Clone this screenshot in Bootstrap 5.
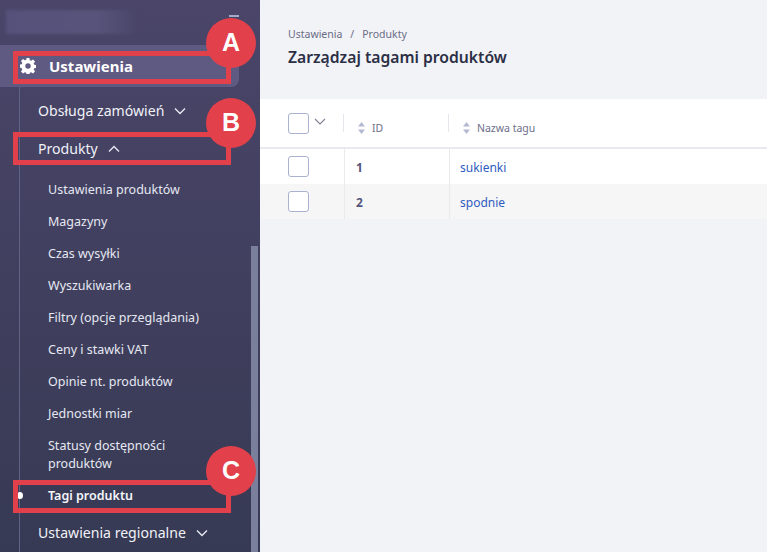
<!doctype html>
<html lang="pl"><head><meta charset="utf-8"><title>Tagi</title>
<link href="https://cdn.jsdelivr.net/npm/bootstrap@5.3.0/dist/css/bootstrap.min.css" rel="stylesheet">
<style>
html,body{height:100%;overflow:hidden}
body{font-family:"Noto Sans","Liberation Sans",sans-serif;background:#f2f3f7;position:relative;width:767px;height:552px}
.shell{height:552px}
.side{width:260px;height:552px;flex:none;background:linear-gradient(180deg,#4a4569 0%,#373a54 100%);position:relative;overflow:hidden;color:#eef0f6}
.logo-blur{height:24px;width:130px;margin:10px 0 11px 6px;background:linear-gradient(90deg,#55517a,#57537a 70%,#4a4569);filter:blur(1.5px)}
.burger{position:absolute;left:229px;top:15px;width:10px;height:2px;background:#a3abc9}
.top-item{height:42px;width:239px;background:#5f5a82;border-radius:0 0 8px 0;padding:0 0 0 20px;font-weight:700;font-size:15px;color:#fff;gap:13px}
.tree{border-left:1px solid #5f6385;margin-left:19px;height:470px;padding-top:5px}
.lvl2{font-size:14.1px;height:38px;padding-left:18px;gap:10px;color:#f0f1f7}
.lvl2.open{margin-bottom:6px}
.lvl2.last{margin-top:2px}
.lvl3{font-size:12.5px;line-height:18px;padding:7px 0 7px 28px;color:#e6e8f2;width:190px}
.lvl3.cur{font-weight:600;color:#f4f5fa;position:relative}
.cur-dot{position:absolute;left:-3px;top:12px;width:6px;height:7px;border-radius:50%;background:#fff}
.sbar{position:absolute;left:251px;top:246px;width:7px;height:306px;background:#7a7f9c}
.crumbs{padding:27px 28px 0;font-size:10.5px;color:#6a6d85;height:99px}
.crumbs .sep{margin:0 8px}
.ttl{font-size:15.7px;font-weight:600;color:#2b2f45;margin:2px 0 0;line-height:24px}
.thead-row{height:50px;background:#fff;border-bottom:2px solid #e9eaee;color:#6d6f8a;font-size:10.5px}
.trow{height:35px;background:#fff}
.trow.alt{background:#f6f6f7}
.c1{width:84px;flex:none;padding-left:28px;gap:5px}
.c2{width:105px;flex:none}
.c3{flex:1}
.thead-row .c1{width:83px}
.thead-row .c2,.thead-row .c3{height:18px;padding:9px 0 0 14px;gap:7px;border-left:1px solid #e6e7ec}
.thead-row span:not(.cbx){margin-top:3px}
.trow .c2,.trow .c3{height:100%;border-left:1px solid #e9eaee;padding:2px 0 0 11px}
.trow .c2{font-weight:700;font-size:12px;color:#53567a}
.trow .c3{font-size:12px;color:#2f5cc0;padding-left:10px}
.cbx{width:21px;height:21px;border:1px solid #a9b2cf;border-radius:3px;background:#fff;flex:none}
.note{position:absolute;border:5px solid #e2404a;left:13px;width:218px;height:33px;pointer-events:none}
.pin{position:absolute;left:206px;width:50px;height:50px;border-radius:50%;background:#e2404a;color:#fff;font-weight:700;font-size:25px;font-family:"Liberation Sans",sans-serif}
.main-col{min-width:0}
.ch-h{margin-bottom:4px}
.note-a{top:51px}.note-b{top:132px}.note-c{top:480px}
.pin-a{top:18px}.pin-b{top:98px}.pin-c{top:446px}
</style></head><body>
<div class="d-flex shell">
<nav class="side">
  <div class="logo-blur"></div>
  <div class="burger"></div>
  <div class="top-item d-flex align-items-center">
    <svg width="16" height="16" viewBox="0 0 16 16" fill="#fff"><path fill-rule="evenodd" d="M6.600 0h2.800l.4 2.200 1.300.6 1.900-1.300 2 2-1.300 1.900.6 1.300 2.200.4v2.800l-2.200.4-.6 1.300 1.300 1.900-2 2-1.900-1.300-1.300.6-.4 2.200H6.600l-.4-2.200-1.300-.6-1.900 1.300-2-2 1.300-1.900-.6-1.300L-.5 9.400V6.600l2.200-.4.6-1.300L1 3l2-2 1.900 1.300 1.300-.6zM8 5.300a2.700 2.700 0 1 0 0 5.400 2.700 2.700 0 0 0 0-5.400z"/></svg>
    <span>Ustawienia</span>
  </div>
  <div class="tree">
    <div class="lvl2 d-flex align-items-center"><span>Obsługa zamówień</span><svg width="12" height="8" viewBox="0 0 12 8" fill="none" stroke="#e6e8f2" stroke-width="1.400"><path d="M1 1.500l5 5 5-5"/></svg></div>
    <div class="lvl2 open d-flex align-items-center"><span>Produkty</span><svg width="12" height="8" viewBox="0 0 12 8" fill="none" stroke="#e6e8f2" stroke-width="1.400"><path d="M1 6.500l5-5 5 5"/></svg></div>
    <div class="lvl3">Ustawienia produktów</div>
    <div class="lvl3">Magazyny</div>
    <div class="lvl3">Czas wysyłki</div>
    <div class="lvl3">Wyszukiwarka</div>
    <div class="lvl3">Filtry (opcje przeglądania)</div>
    <div class="lvl3">Ceny i stawki VAT</div>
    <div class="lvl3">Opinie nt. produktów</div>
    <div class="lvl3">Jednostki miar</div>
    <div class="lvl3">Statusy dostępności produktów</div>
    <div class="lvl3 cur"><span class="cur-dot"></span>Tagi produktu</div>
    <div class="lvl2 last d-flex align-items-center"><span>Ustawienia regionalne</span><svg width="12" height="8" viewBox="0 0 12 8" fill="none" stroke="#e6e8f2" stroke-width="1.400"><path d="M1 1.500l5 5 5-5"/></svg></div>
  </div>
  <div class="sbar"></div>
</nav>
<main class="flex-grow-1 main-col">
  <div class="crumbs">
    <div>Ustawienia<span class="sep">/</span>Produkty</div>
    <h1 class="ttl">Zarządzaj tagami produktów</h1>
  </div>
  <div class="thead-row d-flex align-items-center">
    <div class="c1 d-flex align-items-center"><span class="cbx"></span><svg width="12" height="7" viewBox="0 0 12 7" fill="none" stroke="#7c7f96" stroke-width="1.100" class="ch-h"><path d="M1 1l5 5 5-5"/></svg></div>
    <div class="c2 d-flex align-items-center"><svg width="7" height="12" viewBox="0 0 7 12" fill="#b3b9d0"><path d="M3.500 0L7 4.500H0zM3.500 12L0 7.500h7z"/></svg><span>ID</span></div>
    <div class="c3 d-flex align-items-center"><svg width="7" height="12" viewBox="0 0 7 12" fill="#b3b9d0"><path d="M3.500 0L7 4.500H0zM3.500 12L0 7.500h7z"/></svg><span>Nazwa tagu</span></div>
  </div>
  <div class="trow d-flex align-items-center">
    <div class="c1 d-flex align-items-center"><span class="cbx"></span></div>
    <div class="c2 d-flex align-items-center">1</div>
    <div class="c3 d-flex align-items-center">sukienki</div>
  </div>
  <div class="trow alt d-flex align-items-center">
    <div class="c1 d-flex align-items-center"><span class="cbx"></span></div>
    <div class="c2 d-flex align-items-center">2</div>
    <div class="c3 d-flex align-items-center">spodnie</div>
  </div>
</main>
</div>
<div class="note note-a"></div>
<div class="note note-b"></div>
<div class="note note-c"></div>
<div class="pin pin-a d-flex align-items-center justify-content-center">A</div>
<div class="pin pin-b d-flex align-items-center justify-content-center">B</div>
<div class="pin pin-c d-flex align-items-center justify-content-center">C</div>
</body></html>
